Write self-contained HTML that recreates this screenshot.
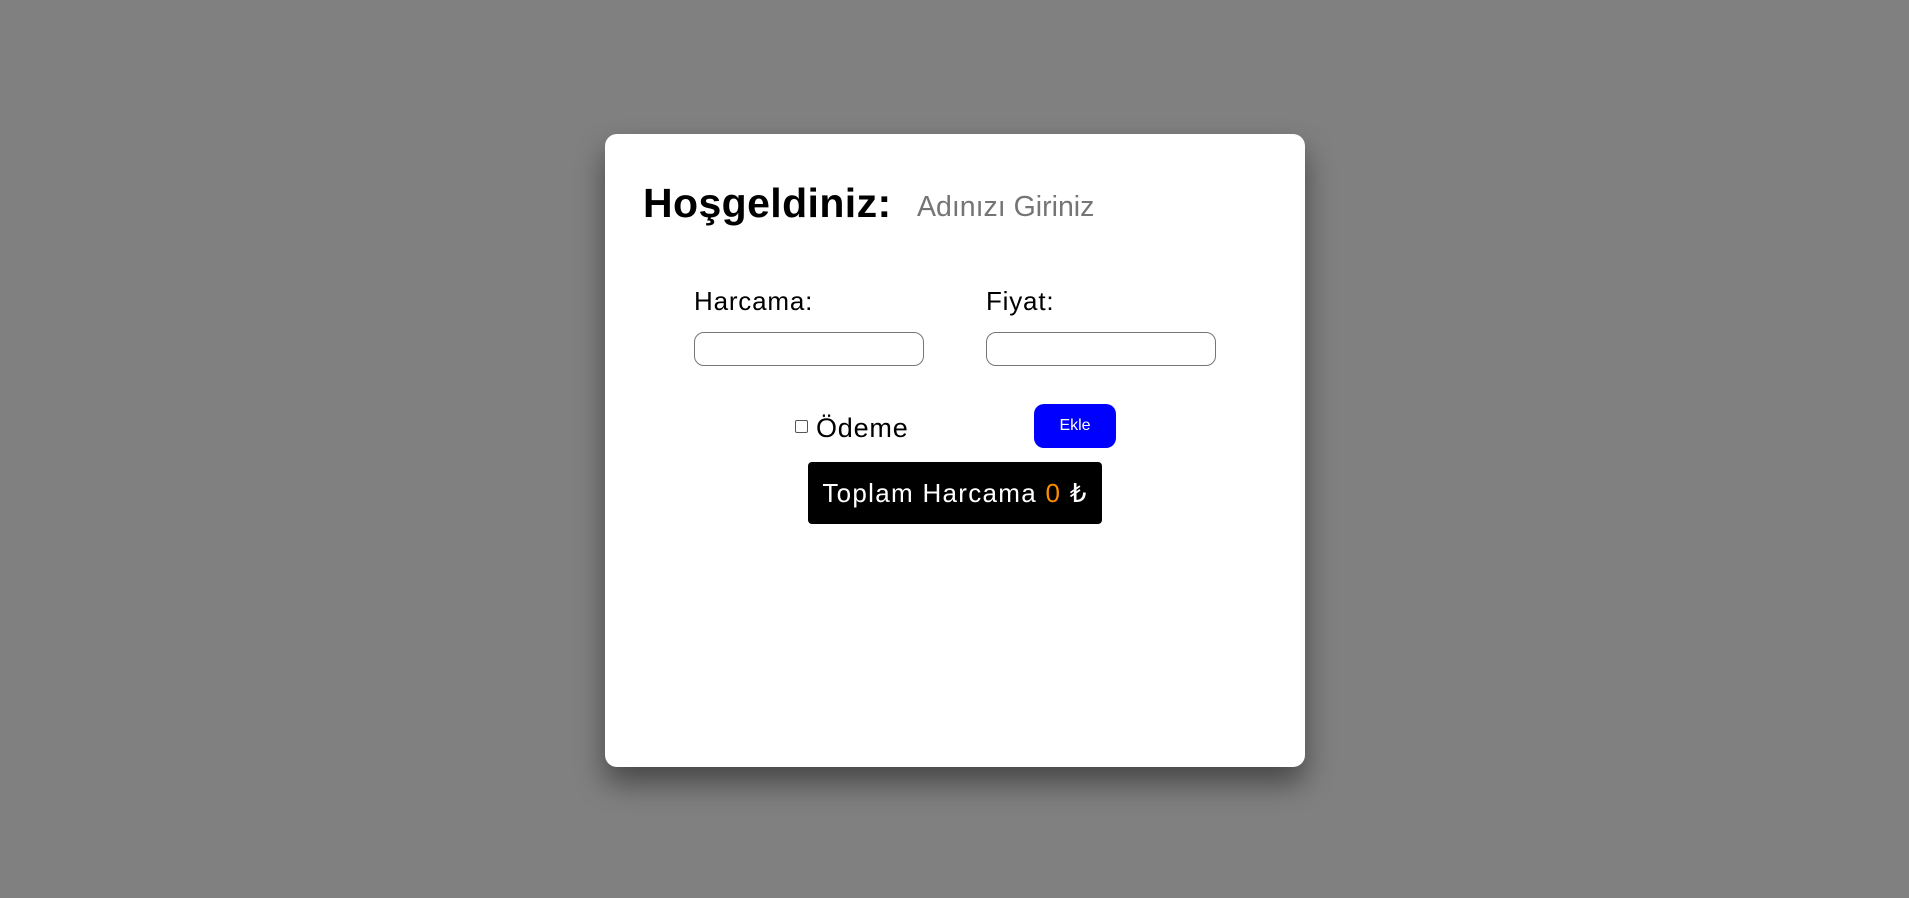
<!DOCTYPE html>
<html><head><meta charset="utf-8"><style>
html,body{margin:0;padding:0;}
body{width:1909px;height:898px;background:#808080;position:relative;overflow:hidden;font-family:"Liberation Sans",Arial,sans-serif;}
.card{position:absolute;left:605px;top:134px;width:700px;height:633px;background:#fff;border-radius:12px;box-shadow:0 16px 30px rgba(0,0,0,.45);}
.a{position:absolute;white-space:nowrap;}
h1{margin:0;position:absolute;left:38px;top:46px;font-size:41px;font-weight:bold;color:#000;letter-spacing:0.4px;}
.ph{left:312px;top:57px;font-size:28.5px;color:#757575;}
.lbl{font-size:26px;color:#000;letter-spacing:0.8px;}
.inp{position:absolute;width:228px;height:32px;border:1px solid #767676;border-radius:10px;background:#fff;}
.cb{position:absolute;left:190px;top:286px;width:11px;height:11px;border:1px solid #555;border-radius:2px;}
.btn{position:absolute;left:429px;top:270px;width:82px;height:44px;background:#0000ff;border-radius:10px;color:#fff;font-size:16px;text-align:center;line-height:44px;}
.tot{position:absolute;left:203px;top:328px;width:294px;height:62px;background:#000;border-radius:4px;color:#fff;font-size:26px;text-align:center;line-height:62px;letter-spacing:1.3px;}
</style></head><body>
<div class="card">
<h1>Hoşgeldiniz:</h1>
<div class="a ph">Adınızı Giriniz</div>
<div class="a lbl" style="left:89px;top:152px;">Harcama:</div>
<div class="a lbl" style="left:381px;top:152px;">Fiyat:</div>
<div class="inp" style="left:89px;top:198px;"></div>
<div class="inp" style="left:381px;top:198px;"></div>
<div class="cb"></div>
<div class="a lbl" style="left:211px;top:279px;font-size:27px;">Ödeme</div>
<div class="btn">Ekle</div>
<div class="tot">Toplam Harcama <span style="color:#ff8c00">0</span> ₺</div>
</div>
</body></html>
